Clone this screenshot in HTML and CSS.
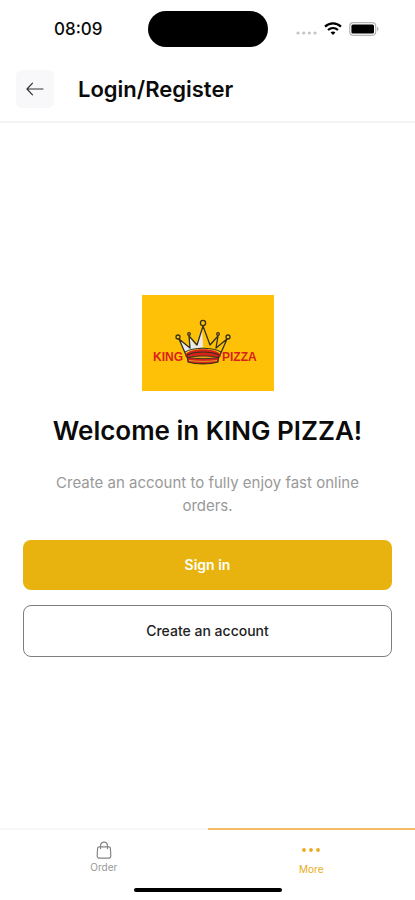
FILE: index.html
```html
<!DOCTYPE html>
<html lang="en">
<head>
    <meta charset="UTF-8">
    <meta name="viewport" content="width=device-width, initial-scale=1.0">
    <title>King Pizza - Login/Register</title>
    <link rel="stylesheet" href="styles.css">
</head>
<body>
    <div class="status-bar">
        <span class="time">08:09</span>
        <div class="island"></div>
        <div class="status-icons">
            <svg width="21" height="4" viewBox="0 0 21 4" fill="#c4c4c4" aria-hidden="true">
                <circle cx="2" cy="2" r="1.6"/><circle cx="7.7" cy="2" r="1.6"/><circle cx="13.3" cy="2" r="1.6"/><circle cx="19" cy="2" r="1.6"/>
            </svg>
            <svg class="wifi" width="18" height="14" viewBox="0 0 18 14" fill="none" stroke="#000" stroke-width="2.2" aria-hidden="true">
                <path d="M1 4.6C5.6 .3 12.4 .3 17 4.600"/>
                <path d="M4 8C7 5.300 11 5.300 14 8"/>
                <path d="M6.6 10.500C8 9.300 10 9.300 11.400 10.500L9 13Z" fill="#000" stroke="none"/>
            </svg>
            <svg width="30" height="14" viewBox="0 0 30 14" aria-hidden="true">
                <rect x=".7" y=".7" width="26" height="12.6" rx="3.5" fill="#fff" stroke="#b5b5b5" stroke-width="1.2"/>
                <rect x="2.4" y="2.4" width="22.6" height="9.2" rx="1.5" fill="#000"/>
                <path d="M28 4.8v4.4c2-.6 2-3.8 0-4.4z" fill="#b5b5b5"/>
            </svg>
        </div>
    </div>

    <header class="header">
        <button class="back-button" type="button" aria-label="Back">
            <svg width="18" height="14" viewBox="0 0 18 14" fill="none" stroke="#333" stroke-width="1.2" stroke-linecap="round" stroke-linejoin="round">
                <path d="M17 7H1M6.500 1.200L1 7l5.500 5.800"/>
            </svg>
        </button>
        <h1>Login/Register</h1>
    </header>

    <main class="content">
        <svg class="logo" width="132" height="96" viewBox="0 0 132 96" role="img" aria-label="King Pizza">
            <rect width="132" height="96" fill="#ffc107"/>
            <path d="M43 58L37 44l11 9 0-11 6 9 6-18 1 19-12 3z" fill="#e9e9ee"/>
            <g fill="none" stroke="#33301c" stroke-width="1.300" stroke-linejoin="round">
                <path d="M44 60L37 44l11 9-1-12 8 9 6-19 7 19 8-9-2 12 11-9-7 16"/>
                <circle cx="61" cy="28" r="2.600"/>
                <circle cx="36" cy="42" r="2"/>
                <circle cx="47" cy="39" r="1.300"/>
                <circle cx="76" cy="39" r="1.300"/>
                <circle cx="86" cy="42" r="2"/>
            </g>
            <path d="M43 61c1-9 35-9 36 0l-3 3c-8-6-22-6-30 0z" fill="#d8231b"/>
            <path d="M43 57c8-5 28-5 36 0" fill="none" stroke="#33301c" stroke-width="1"/>
            <path d="M45 60c8-4 24-4 32 0l-1 7c-8 2.500-22 2.500-30 0z" fill="#d8231b" stroke="#33301c" stroke-width="1.200"/>
            <path d="M46 62.500c9-2 21-2 30 0-9 1.600-21 1.600-30 0z" fill="#e5a01c" stroke="#33301c" stroke-width=".9"/>
            <path d="M47 65.500c9 1.200 19 1.200 28 0" fill="none" stroke="#e5a01c" stroke-width="1"/>
            <g class="logo-text">
                <text x="11" y="66">KING</text>
                <text x="80" y="66">PIZZA</text>
            </g>
        </svg>
        <h2>Welcome in KING PIZZA!</h2>
        <p>Create an account to fully enjoy fast online orders.</p>
        <div class="actions">
            <button class="button button-primary" type="button">Sign in</button>
            <button class="button button-outline" type="button">Create an account</button>
        </div>
    </main>

    <nav class="tab-bar">
        <a class="tab" href="#order">
            <svg width="16" height="18" viewBox="0 0 16 18" fill="none" stroke="#858585" stroke-width="1.200" stroke-linejoin="round" aria-hidden="true">
                <path d="M3 5.800h10c.9 0 1.300.4 1.400 1.200l.4 7.700c0 1.600-.8 2.500-2.300 2.500h-9c-1.500 0-2.300-.9-2.300-2.500L1.600 7c.1-.8.500-1.200 1.400-1.200z"/>
                <path d="M4.500 8V5C4.500-.3 11.500-.3 11.500 5v3"/>
            </svg>
            <span>Order</span>
        </a>
        <a class="tab tab-active" href="#more" aria-current="page">
            <svg width="18" height="18" viewBox="0 0 18 18" fill="#e8ac20" aria-hidden="true">
                <circle cx="2" cy="9" r="1.900"/><circle cx="9" cy="9" r="1.900"/><circle cx="16" cy="9" r="1.900"/>
            </svg>
            <span>More</span>
        </a>
        <div class="home-indicator"></div>
    </nav>
</body>
</html>
```

FILE: styles.css
```css
:root {
    --primary-color: #e8b30e;
    --text-color: #0b0b0b;
    --muted-color: #999999;
    --line-color: #f3f3f3;
}

* {
    box-sizing: border-box;
}

body {
    font-family: Inter, "Liberation Sans", sans-serif;
    background-color: #fff;
    color: var(--text-color);
    margin: 0;
    min-height: 100vh;
    display: flex;
    flex-direction: column;
}

.status-bar {
    display: grid;
    grid-template-columns: 1fr 120px 1fr;
    align-items: center;
    padding: 11px 0 10px;
}

.time {
    font-size: 17px;
    font-weight: 500;
    padding-left: 54px;
}

.island {
    height: 36px;
    border-radius: 18px;
    background-color: #000;
}

.status-icons {
    display: flex;
    align-items: center;
    justify-content: flex-end;
    gap: 7px;
    padding-right: 36px;
}

.status-icons svg:first-child {
    margin-top: 8px;
}

.header {
    display: flex;
    align-items: center;
    gap: 24px;
    padding: 13px 16px 13px;
    border-bottom: 2px solid var(--line-color);
}

.header h1 {
    font-size: 22px;
    line-height: 28px;
    font-weight: 600;
    margin: 0;
}

.back-button {
    display: flex;
    align-items: center;
    justify-content: center;
    width: 38px;
    height: 38px;
    padding: 0;
    border: none;
    border-radius: 6px;
    background-color: #f8f8fb;
    cursor: pointer;
}

.content {
    flex: 1;
    display: flex;
    flex-direction: column;
    align-items: center;
    justify-content: center;
    padding: 0 23px;
    text-align: center;
}

.logo {
    display: block;
}

.logo-text {
    font-family: "Liberation Sans", sans-serif;
    font-size: 12px;
    font-weight: 700;
    fill: #d8231b;
}

.content h2 {
    font-size: 26px;
    line-height: 32px;
    font-weight: 600;
    margin: 24px 0;
}

.content p {
    font-size: 15px;
    line-height: 23px;
    color: var(--muted-color);
    margin: 0 0 23px;
    padding: 0 16px;
}

.actions {
    width: 100%;
    display: flex;
    flex-direction: column;
    gap: 15px;
}

.button {
    width: 100%;
    padding: 15px;
    border: none;
    border-radius: 8px;
    font-family: inherit;
    font-size: 14px;
    line-height: 20px;
    cursor: pointer;
}

.button-primary {
    background-color: var(--primary-color);
    color: #fff;
    font-weight: 600;
}

.button-outline {
    background-color: #fff;
    border: 1px solid #7d7d7d;
    color: #222;
    font-weight: 500;
}

.tab-bar {
    position: relative;
    display: flex;
    height: 72px;
}

.tab {
    flex: 1;
    display: flex;
    flex-direction: column;
    align-items: center;
    gap: 2px;
    padding-top: 11px;
    border-top: 2px solid #f7f7f7;
    color: var(--muted-color);
    font-size: 10px;
    line-height: 12px;
    text-decoration: none;
}

.tab-active {
    gap: 4px;
    border-top-color: #f3bd67;
    color: #e8ac20;
}

.home-indicator {
    position: absolute;
    left: 50%;
    bottom: 8px;
    width: 148px;
    height: 4px;
    margin-left: -74px;
    border-radius: 2px;
    background-color: #000;
}
```
